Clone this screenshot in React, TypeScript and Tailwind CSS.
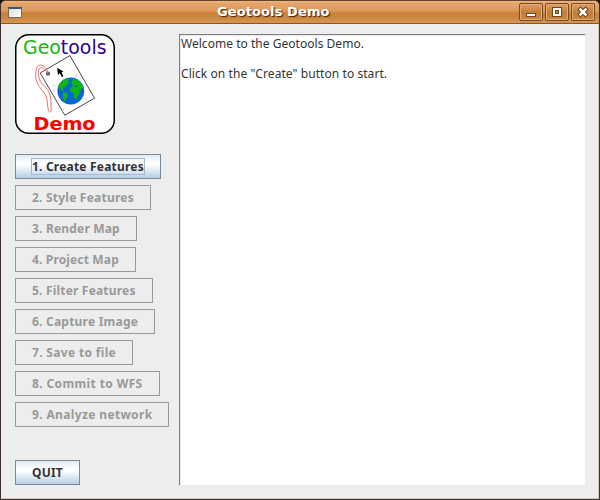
import React from "react";

const steps = [
  { label: "2. Style Features", box: "w-[136px]", spacing: "tracking-[0.22px]" },
  { label: "3. Render Map", box: "w-[122px]", spacing: "tracking-[0.18px]" },
  { label: "4. Project Map", box: "w-[121px]", spacing: "tracking-[0.15px]" },
  { label: "5. Filter Features", box: "w-[138px]", spacing: "tracking-[0.19px]" },
  { label: "6. Capture Image", box: "w-[140px]", spacing: "tracking-[0.22px]" },
  { label: "7. Save to file", box: "w-[118px]", spacing: "tracking-[0.33px]" },
  { label: "8. Commit to WFS", box: "w-[145px]", spacing: "tracking-[0.38px]" },
  { label: "9. Analyze network", box: "w-[154px]", spacing: "tracking-[0.36px]" },
];

const metal =
  "border border-[#7a8a99] bg-[linear-gradient(#dfe9f2_0%,#ffffff_34%,#ffffff_42%,#b8cfe5_100%)] text-[#333333]";

function Logo() {
  return (
    <svg width="100" height="100" viewBox="0 0 100 100" className="block shrink-0">
      <rect x="0.75" y="0.75" width="98.5" height="98.5" rx="13" fill="#fff" stroke="#000" strokeWidth="1.5" />
      <text x="8" y="20" fontSize="19.4" fontWeight="400" textLength="83.5" lengthAdjust="spacingAndGlyphs" fontFamily="DejaVu Sans, sans-serif">
        <tspan fill="#14b814">Geo</tspan>
        <tspan fill="#310096">tools</tspan>
      </text>
      <path d="M25.2 39 54.9 21.6 79.6 64.2 49.8 81.2Z" fill="#fff" stroke="#333" strokeWidth=".9" />
      <path d="M60 44l2-4M37 51l4 1M36 58l4-2M69 64l4 3M47 79l2-5" stroke="#bbb" strokeWidth=".6" />
      <circle cx="33" cy="39.6" r="2.2" fill="#666" />
      <path
        d="M33 39C32 35 29 31 25 31C21 32 20.5 37 20.8 43C21 49 25 54 28.5 58C33 63 32 70 33.4 77Q34.8 79.5 36.2 77C36 69 36.5 61 32.5 55.5C29 51 25 49 24 44C23 39 23 35 25.5 33.7C28 33 30 37 33 39"
        fill="none" stroke="#e56060" strokeWidth=".9"
      />
      <circle cx="55.8" cy="57" r="13.4" fill="#0865d5" />
      <g fill="#0fb514">
        <path d="M43.1 52.5C45 48 48 45 52 44.2L54.5 45L53 47L55 48.5L52 50.5L50 53.5L47.5 54L49.5 57L47 56.5L44 54.5Z" />
        <path d="M48.5 58L53 59.5L52.5 63L49.5 68L48.5 65L47.5 61Z" />
        <path d="M56.5 49L58 45L62 45.3C66 48 68 51 69 56L67 53.5L65.5 57L64 54.5L65 59L62.5 62L61.5 66L59 63.5L58.5 59L55.5 58L55 54L57.5 52Z" />
      </g>
      <path d="M58 52L61 51.5L63 53L60 53Z" fill="#0865d5" />
      <path d="M42.1 33.7L48.5 37.5L46.5 38.2L48.4 42.2L46.8 43L44.8 39L43 41Z" fill="#000" />
      <text x="18.5" y="96" fontSize="18.3" fontWeight="700" textLength="62" lengthAdjust="spacingAndGlyphs" fill="#f00" fontFamily="DejaVu Sans, sans-serif">Demo</text>
    </svg>
  );
}

function WindowButton({ children }: { children: React.ReactNode }) {
  return (
    <button className="h-[18px] w-6 rounded-[2px] border border-[#7a4a20] bg-[linear-gradient(#dda066,#c27e38_55%,#c88743)] shadow-[inset_0_0_0_1px_#e3aa76]">
      <svg width="22" height="16" viewBox="0 0 22 16" className="block">
        {children}
      </svg>
    </button>
  );
}

export default function App() {
  return (
    <div className="h-[500px] w-[600px] overflow-hidden bg-[#24120c]">
      <div className="flex h-[500px] w-[600px] flex-col overflow-hidden rounded-t-[6px] border border-[#40302b] border-b-[#393332] border-t-[#63452e] bg-[#ededed]">
        <header className="flex h-[23px] shrink-0 items-center border-b border-[#83562e] bg-[linear-gradient(#f0b87f_0px,#e5a66b_2px,#dc9a5d_10px,#c98138_12px,#c9853f_16px,#d89650_22px)] pl-[7px] pr-[4px]">
          <div className="h-[11px] w-[14px] border border-t-2 border-[#756a5f] border-t-[#31577e] bg-[linear-gradient(135deg,#dcdcdc,#ffffff)]" />
          <h1 className="ml-[195px] flex-1 whitespace-nowrap font-['DejaVu_Sans',sans-serif] text-[13px] font-bold leading-[20px] tracking-[0.1px] text-white [text-shadow:1px_1px_1px_#3a220e]">
            Geotools Demo
          </h1>
          <div className="flex gap-[2px]">
            <WindowButton>
              <path d="M6 9h10v4H6z" fill="#72451c" />
              <path d="M7 10h8v2H7z" fill="#fff" />
            </WindowButton>
            <WindowButton>
              <path d="M6 3h10v10H6z" fill="#72451c" />
              <path d="M7 4h8v8H7z" fill="#fff" />
              <path d="M9 6h4v4H9z" fill="#72451c" />
              <path d="M10 7h2v2h-2z" fill="#c4813d" />
            </WindowButton>
            <WindowButton>
              <path d="M8.4 5.4l5.2 5.2m0-5.2l-5.2 5.2" stroke="#72451c" strokeWidth="4.4" strokeLinecap="square" />
              <path d="M8.4 5.4l5.2 5.2m0-5.2l-5.2 5.2" stroke="#fff" strokeWidth="2.4" strokeLinecap="square" />
            </WindowButton>
          </div>
        </header>
        <div className="flex min-h-0 flex-1 border-b border-l border-r border-b-[#d5c6b8] border-l-[#f5e9df] border-r-[#d5c6b8] pl-[13px] pt-[10px] font-['Noto_Sans',sans-serif] text-[12px]">
          <aside className="flex w-[164px] shrink-0 flex-col items-start font-bold">
            <Logo />
            <button className={`mt-5 flex h-[25px] w-[146px] shrink-0 items-center pl-[15px] ${metal}`}>
              <span className="h-[17px] w-[114px] whitespace-nowrap border border-[#a3b8cc] text-left leading-[15px] tracking-[0.2px]">1. Create Features</span>
            </button>
            <div className="mt-[6px] flex flex-col gap-[6px]">
              {steps.map((s) => (
                <button
                  key={s.label}
                  disabled
                  className={`flex h-[25px] items-center whitespace-nowrap border border-[#999999] pl-4 leading-[15px] text-[#999999] ${s.box} ${s.spacing}`}
                >
                  {s.label}
                </button>
              ))}
            </div>
            <button className={`mt-[33px] flex h-[25px] w-[65px] shrink-0 items-center pl-4 leading-[15px] tracking-[0.2px] ${metal}`}>QUIT</button>
          </aside>
          <main className="h-[451px] w-[406px] whitespace-pre border-l border-t border-[#808080] bg-white pl-[1px] pt-[1px] leading-[15px] text-[#333333] shadow-[inset_1px_1px_0_#e8e8e8]">
            <p className="tracking-[0.03px]">Welcome to the Geotools Demo.</p>
            <p className="mt-[15px] tracking-[0.07px]">Click on the "Create" button to start.</p>
          </main>
        </div>
      </div>
    </div>
  );
}
